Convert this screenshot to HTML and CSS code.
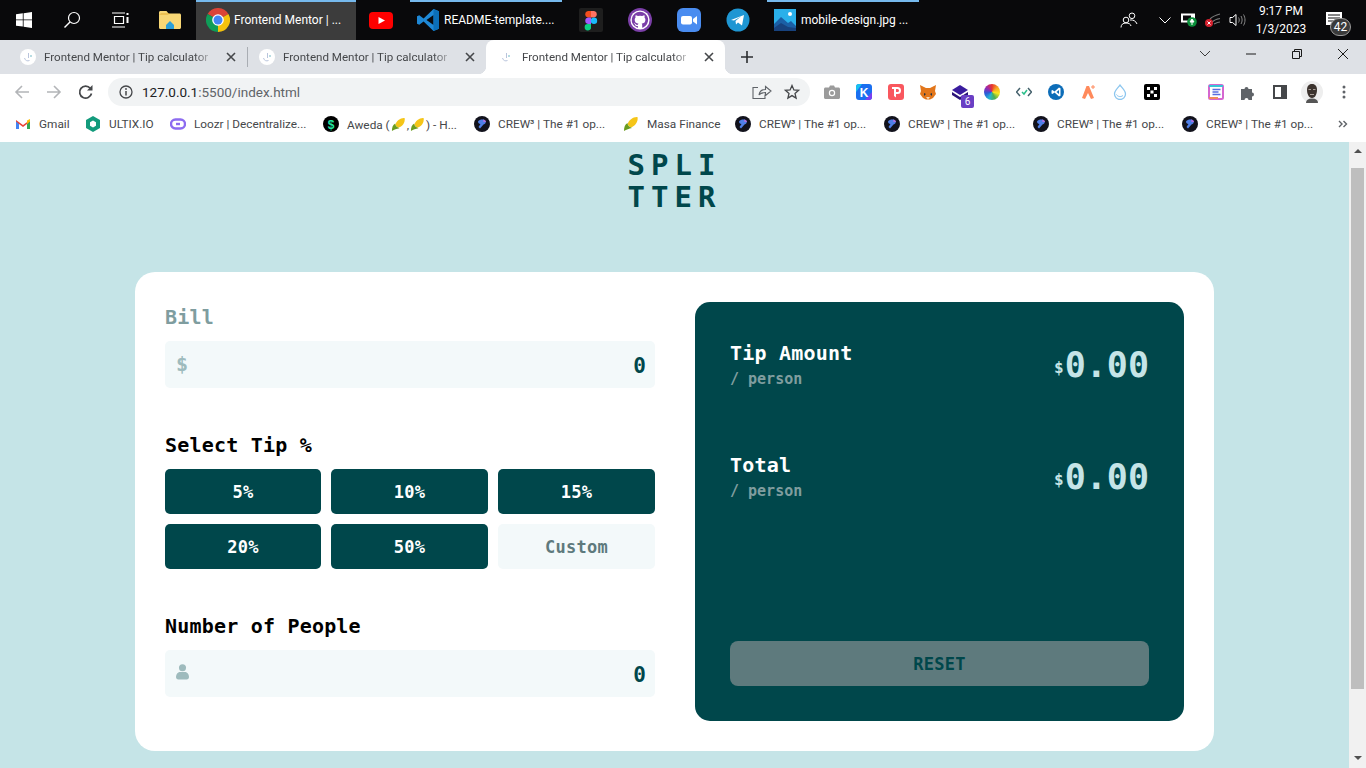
FILE: index.html
```html
<!DOCTYPE html>
<html>
<head>
    <title>Frontend Mentor | Tip calculator app</title>
    <link rel="stylesheet" href="styles.css">
</head>
<body>
    <svg class="sprite">
        <symbol id="fm" viewBox="0 0 16 16">
            <circle cx="8" cy="8" r="8" fill="#fff"/>
            <path d="M8.500 4v5M4.500 9c.5 2.500 3 3.500 5 2.500" stroke="#b9c4dc" stroke-width="1" fill="none"/>
            <circle cx="11" cy="7" r="1" fill="#9fd0d8"/>
        </symbol>
        <symbol id="x" viewBox="0 0 16 16">
            <path d="M4 4l8 8M12 4l-8 8" stroke="#45474a" stroke-width="1.600"/>
        </symbol>
        <symbol id="crew" viewBox="0 0 16 16">
            <circle cx="8" cy="8" r="8" fill="#12121c"/>
            <path d="M4 5.500c2-2.500 6-2.500 7.500-.5 1 1.500-.5 3-2 3.500L6 12.500 4.500 11 6.500 8C5 8 4 7 4 5.500z" fill="#4f7fe8"/>
            <path d="M9 3.500c1.500 0 3 1 3 2.500L9.500 6z" fill="#b06fe0"/>
        </symbol>
        <symbol id="corn" viewBox="0 0 16 16">
            <path d="M14.500 1c-4-.5-9 3-10 7.500l3 3C12 10.500 15.500 5.500 14.500 1z" fill="#f5c518"/>
            <path d="M1 15c0-4 1-6.500 3.500-8 0 2 1.500 4 4.500 5-3 .5-5.500 1.500-8 3z" fill="#6a9c1f"/>
        </symbol>
    </svg>

    <div class="window">
        <div class="taskbar">
            <div class="task task-start">
                <svg width="16" height="16" viewBox="0 0 16 16"><path d="M0 2.300l6.800-1v6.200H0zM7.600 1.200L16 0v7.500H7.600zM0 8.300h6.800v6.300L0 13.700zM7.600 8.300H16V16l-8.400-1.200z" fill="#fff"/></svg>
            </div>
            <div class="task task-search">
                <svg width="18" height="18" viewBox="0 0 18 18"><circle cx="11" cy="7" r="5.500" fill="none" stroke="#fff" stroke-width="1.200"/><path d="M7 11l-5.500 5.500" stroke="#fff" stroke-width="1.400"/></svg>
            </div>
            <div class="task task-view">
                <svg width="18" height="16" viewBox="0 0 18 16"><path d="M3.500 4.500h9v7h-9zM1 1h13M1 15h13" fill="none" stroke="#fff" stroke-width="1.200"/><path d="M15.500 1h2v2h-2zM15.500 5h2v6h-2z" fill="#fff"/></svg>
            </div>
            <div class="task task-files">
                <svg width="22" height="18" viewBox="0 0 22 18"><path d="M0 1.500C0 .7.600 0 1.500 0h6l2 2.500h11c.8 0 1.500.7 1.500 1.500v12.500c0 .8-.7 1.500-1.500 1.500h-19C.6 18 0 17.300 0 16.500z" fill="#f8d775"/><path d="M0 3.500h9l1.500-1H2z" fill="#e0a92e"/><path d="M7 14l4-4 4 4v4H7z" fill="#2b9fd8"/></svg>
            </div>
            <div class="task task-app task-chrome">
                <svg width="24" height="24" viewBox="0 0 24 24"><path d="M12 12L1.600 6A12 12 0 0 1 22.400 6z" fill="#db4437"/><path d="M12 12L22.400 6A12 12 0 0 1 12 24z" fill="#f4c20d"/><path d="M12 12L12 24A12 12 0 0 1 1.600 6z" fill="#0f9d58"/><circle cx="12" cy="12" r="5.800" fill="#fff"/><circle cx="12" cy="12" r="4.500" fill="#4285f4"/></svg>
                <span>Frontend Mentor | ...</span>
            </div>
            <div class="task task-youtube">
                <svg width="24" height="17" viewBox="0 0 24 17"><rect width="24" height="17" rx="4" fill="#f00"/><path d="M9.500 5l6.500 3.500-6.500 3.500z" fill="#fff"/></svg>
            </div>
            <div class="task task-app task-code">
                <svg width="24" height="24" viewBox="0 0 24 24"><path d="M17.500 1L7.600 10.500 3.300 7.200 1 8.300v7.400l2.300 1.100 4.300-3.300 9.900 9.500 5.500-2.200V3.200z" fill="#1e88d6"/><path d="M17.500 7L10.500 12l7 5z" fill="#0a0a0c"/><path d="M17.500 1l5.500 2.200v17.600L17.500 23z" fill="#0b6fb8"/></svg>
                <span>README-template....</span>
            </div>
            <div class="task task-figma">
                <svg width="24" height="24" viewBox="0 0 24 24"><rect width="24" height="24" fill="#1e1e1e" rx="2"/><path d="M12 3H9a3.300 3.300 0 0 0 0 6.500h3z" fill="#f24e1e"/><path d="M12 3h3a3.300 3.300 0 0 1 0 6.500h-3z" fill="#ff7262"/><path d="M12 9.500H9A3.300 3.300 0 0 0 9 16h3z" fill="#a259ff"/><circle cx="15" cy="12.700" r="3.200" fill="#1abcfe"/><path d="M9 16h3v2.700A3.200 3.200 0 1 1 9 16z" fill="#0acf83"/></svg>
            </div>
            <div class="task task-github">
                <svg width="24" height="24" viewBox="0 0 24 24"><circle cx="12" cy="12" r="12" fill="#7b3fa8"/><circle cx="12" cy="12" r="9.600" fill="#fff"/><path d="M12 3.800a8.200 8.200 0 0 0-2.600 16c.4.100.5-.2.500-.4v-1.400c-2.300.5-2.700-1.100-2.700-1.100-.4-1-1-1.200-1-1.200-.7-.5.100-.5.100-.5.800 0 1.300.8 1.300.8.700 1.200 1.900.9 2.400.7 0-.5.300-.9.500-1.100-1.800-.2-3.800-.9-3.800-4.100 0-.9.300-1.600.9-2.100-.1-.3-.4-1.100.1-2.200 0 0 .7-.2 2.300.8a8 8 0 0 1 4.100 0c1.600-1 2.300-.8 2.300-.8.500 1.100.2 1.900.1 2.200.5.500.9 1.300.9 2.100 0 3.200-1.900 3.900-3.800 4.100.3.300.6.700.6 1.500v2.200c0 .2.100.500.600.4A8.200 8.200 0 0 0 12 3.800z" fill="#7b3fa8"/></svg>
            </div>
            <div class="task task-zoom">
                <svg width="24" height="24" viewBox="0 0 24 24"><rect width="24" height="24" rx="6" fill="#4a8cf0"/><rect x="4" y="8" width="11" height="8.500" rx="2" fill="#fff"/><path d="M16 11l4-3v8.500l-4-3z" fill="#fff"/></svg>
            </div>
            <div class="task task-telegram">
                <svg width="24" height="24" viewBox="0 0 24 24"><circle cx="12" cy="12" r="11.500" fill="#1e96d3"/><path d="M5 12l13-5-2 10.500-4-3-2 2-.5-3.500 5.500-4.500-7 4z" fill="#fff"/></svg>
            </div>
            <div class="task task-app task-photo">
                <svg width="22" height="22" viewBox="0 0 22 22"><rect width="22" height="22" fill="#2ab0ea"/><circle cx="16" cy="5" r="2" fill="#fff"/><path d="M0 15l7-7 7 6 3-2 5 5v5H0z" fill="#1b5fa5"/><path d="M0 19l7-5 7 4 8 1v3H0z" fill="#17427e"/></svg>
                <span>mobile-design.jpg ...</span>
            </div>
            <div class="tray">
                <div class="tray-item tray-people">
                    <svg width="18" height="16" viewBox="0 0 18 16"><circle cx="6" cy="8" r="2.800" fill="none" stroke="#fff"/><path d="M1 15.500c0-3 2-4.500 5-4.500s4.500 1 5 3" fill="none" stroke="#fff"/><circle cx="12" cy="3.800" r="2.800" fill="none" stroke="#fff"/><path d="M10 8c3-.5 6 1 7 4" fill="none" stroke="#fff"/></svg>
                </div>
                <div class="tray-item tray-chevron">
                    <svg width="12" height="7" viewBox="0 0 12 7"><path d="M.5.500L6 6 11.500.500" fill="none" stroke="#fff"/></svg>
                </div>
                <div class="tray-item">
                    <svg width="16" height="14" viewBox="0 0 16 14"><rect x=".5" y="1" width="13" height="8" fill="#fff" stroke="#fff"/><rect x="2" y="2.500" width="8" height="5" fill="#0a0a0c"/><circle cx="11" cy="9" r="4.800" fill="#0b8f3a"/><path d="M11 6l2 3h-4zM11 8v4" stroke="#fff" fill="#fff"/></svg>
                </div>
                <div class="tray-item">
                    <svg width="16" height="14" viewBox="0 0 16 14"><path d="M5 6c3-3 6-4 10-5M7 9c2-2 5-3 8-3.500M9 11c2-1 4-2 6-2" fill="none" stroke="#777" stroke-width="1.200"/><circle cx="4" cy="10" r="4" fill="#d4202e"/><path d="M2.500 8.500l3 3M5.500 8.500l-3 3" stroke="#fff"/></svg>
                </div>
                <div class="tray-item">
                    <svg width="17" height="14" viewBox="0 0 17 14"><path d="M1 4.500h2.500L7 1.500v11l-3.500-3H1z" fill="none" stroke="#fff"/><path d="M9.500 4.500c1 1.500 1 3.500 0 5M12 3c1.500 2.500 1.500 5.500 0 8M14.500 1.500c2 3.500 2 7.500 0 11" fill="none" stroke="#888"/></svg>
                </div>
                <div class="tray-clock">
                    <span>9:17 PM</span>
                    <span>1/3/2023</span>
                </div>
                <div class="tray-note">
                    <svg width="16" height="13" viewBox="0 0 16 13"><rect width="16" height="13" fill="#fff"/><path d="M2 3h12M2 6h12M2 9h8" stroke="#0a0a0c"/></svg>
                    <span class="note-badge">42</span>
                </div>
            </div>
        </div>

        <div class="tabstrip">
            <div class="tab">
                <svg class="tab-icon"><use href="#fm"/></svg>
                <span class="tab-title">Frontend Mentor | Tip calculator</span>
                <svg class="tab-close"><use href="#x"/></svg>
            </div>
            <div class="tab-divider"></div>
            <div class="tab">
                <svg class="tab-icon"><use href="#fm"/></svg>
                <span class="tab-title">Frontend Mentor | Tip calculator</span>
                <svg class="tab-close"><use href="#x"/></svg>
            </div>
            <div class="tab tab-active">
                <svg class="tab-icon"><use href="#fm"/></svg>
                <span class="tab-title">Frontend Mentor | Tip calculator</span>
                <svg class="tab-close"><use href="#x"/></svg>
            </div>
            <svg class="tab-new" width="12" height="12" viewBox="0 0 12 12"><path d="M6 0v12M0 6h12" stroke="#2b2d30" stroke-width="1.600"/></svg>
            <div class="window-controls">
                <svg width="46" height="12" viewBox="0 0 46 12"><path d="M18 3l5 5 5-5" fill="none" stroke="#3c3c3c"/></svg>
                <svg width="46" height="12" viewBox="0 0 46 12"><path d="M18 6h10" stroke="#1a1a1a"/></svg>
                <svg width="46" height="12" viewBox="0 0 46 12"><path d="M18.500 3.500h7v7h-7zM20.500 3.500v-2h7v7h-2" fill="none" stroke="#1a1a1a"/></svg>
                <svg width="46" height="12" viewBox="0 0 46 12"><path d="M18 1l10 10M28 1L18 11" stroke="#1a1a1a"/></svg>
            </div>
        </div>

        <div class="toolbar">
            <div class="tool-btn">
                <svg width="16" height="16" viewBox="0 0 16 16"><path d="M15 8H2M8 2L2 8l6 6" fill="none" stroke="#b3b5b8" stroke-width="1.600"/></svg>
            </div>
            <div class="tool-btn">
                <svg width="16" height="16" viewBox="0 0 16 16"><path d="M1 8h13M8 2l6 6-6 6" fill="none" stroke="#b3b5b8" stroke-width="1.600"/></svg>
            </div>
            <div class="tool-btn">
                <svg width="16" height="16" viewBox="0 0 16 16"><path d="M13.500 9.500a6 6 0 1 1-1.200-5.200" fill="none" stroke="#45474a" stroke-width="1.700"/><path d="M14.500 1v5.500H9z" fill="#45474a"/></svg>
            </div>
            <div class="omnibox">
                <svg class="omni-info" width="14" height="14" viewBox="0 0 14 14"><circle cx="7" cy="7" r="6" fill="none" stroke="#45474a" stroke-width="1.300"/><path d="M7 6v4.500" stroke="#45474a" stroke-width="1.500"/><circle cx="7" cy="4" r=".9" fill="#45474a"/></svg>
                <span class="omni-url"><b>127.0.0.1</b>:5500/index.html</span>
                <div class="omni-actions">
                    <svg width="32" height="16" viewBox="0 0 32 16"><path d="M14 3.500H9v11h12v-4M15 11c.5-3.500 3-5.500 6.500-5.500V2.500L27 7l-5.500 4.500V8.500C19 8.500 16.500 9 15 11z" fill="none" stroke="#5f6368" stroke-width="1.100"/></svg>
                    <svg width="32" height="16" viewBox="0 0 32 16"><path d="M16 1.500l1.900 4.400 4.700.4-3.600 3.100 1.100 4.700-4.100-2.500-4.100 2.500 1.100-4.700-3.600-3.100 4.700-.4z" fill="none" stroke="#45474a" stroke-width="1.300"/></svg>
                </div>
            </div>
            <div class="extensions">
                <div class="tool-btn"><svg width="16" height="14" viewBox="0 0 16 14"><path d="M1.500 2.500H5L6 .5h4l1 2h3.500c.8 0 1.500.7 1.500 1.500v8.500c0 .8-.7 1.500-1.500 1.500h-13C.7 14 0 13.300 0 12.500V4c0-.8.700-1.500 1.500-1.500z" fill="#9b9b9b"/><circle cx="8" cy="8" r="3.200" fill="#fff"/><circle cx="8" cy="8" r="2" fill="#9b9b9b"/></svg></div>
                <div class="tool-btn"><svg width="16" height="16" viewBox="0 0 16 16"><rect width="16" height="16" rx="3" fill="#1a6ff0"/><path d="M0 3a3 3 0 0 1 3-3h3L0 8z" fill="#19c2f0"/><path d="M16 8v5a3 3 0 0 1-3 3H9z" fill="#7a3ff0"/><text x="8" y="12.500" class="ext-letter">K</text></svg></div>
                <div class="tool-btn"><svg width="16" height="16" viewBox="0 0 16 16"><rect width="16" height="16" rx="3" fill="#f9575e"/><path d="M4 3h5.500a3.500 3.500 0 0 1 0 7H8v3.500L6 12V5H4z" fill="#fff"/><path d="M8 5h1.500a1.500 1.500 0 0 1 0 3H8z" fill="#f9575e"/></svg></div>
                <div class="tool-btn"><svg width="16" height="16" viewBox="0 0 16 16"><path d="M0 1l6 3h4l6-3-1 6 1 3-3 4-3 1.500H6L3 14l-3-4 1-3z" fill="#e2761b"/><path d="M4 9l2 1-2 2zM12 9l-2 1 2 2z" fill="#233447"/><path d="M6 13h4l-2 2.500z" fill="#f6ddc1"/></svg></div>
                <div class="tool-btn tool-badge"><svg width="16" height="16" viewBox="0 0 16 16"><path d="M8 1l8 5-8 5-8-5z" fill="#3a1c9e"/><path d="M0 8l8 5 8-5v3l-8 5-8-5z" fill="#2a1478"/></svg><span class="ext-badge">6</span></div>
                <div class="tool-btn"><span class="ext-wheel"></span></div>
                <div class="tool-btn"><svg width="16" height="10" viewBox="0 0 16 10"><path d="M4 1L.5 5 4 9M12 1l3.500 4L12 9" fill="none" stroke="#44606b" stroke-width="1.500"/><path d="M6 5l2 2 3-4" fill="none" stroke="#2bbf8a" stroke-width="1.500"/></svg></div>
                <div class="tool-btn"><svg width="16" height="16" viewBox="0 0 16 16"><circle cx="8" cy="8" r="8" fill="#0d6db8"/><path d="M11 3.500L6.500 7.500 4.500 6 3.500 6.500v3l1 .5 2-1.500 4.500 4 1.500-.7V4.200z" fill="#fff"/><path d="M11 6L8.500 8l2.500 2z" fill="#0d6db8"/></svg></div>
                <div class="tool-btn"><svg width="16" height="16" viewBox="0 0 16 16"><path d="M6.500 2h2.500l5 12-3 1-3-6-3 6-3-1z" fill="#ff8a5c"/><path d="M13 1v4M11 3h4" stroke="#ff8a5c"/></svg></div>
                <div class="tool-btn"><svg width="14" height="16" viewBox="0 0 14 16"><path d="M7 1c2 3 5.500 5.500 5.500 9A5.500 5.500 0 0 1 1.500 10C1.500 6.500 5 4 7 1z" fill="none" stroke="#8cc6ef" stroke-width="1.300"/><path d="M3.500 10.500c1 2 4 3 6.500 1" fill="none" stroke="#8cc6ef"/></svg></div>
                <div class="tool-btn"><svg width="16" height="16" viewBox="0 0 16 16"><rect width="16" height="16" rx="2" fill="#000"/><path d="M3 3h3v3H3zM10 3h3v3h-3zM6.500 6.500h3v3h-3zM3 10h3v3H3zM10 10h3v3h-3z" fill="#fff"/></svg></div>
                <div class="tool-btn tool-gap"><svg width="16" height="16" viewBox="0 0 16 16"><rect x="1" y="1" width="14" height="14" rx="1.500" fill="none" stroke="#d567d0" stroke-width="2"/><path d="M1 2h14" stroke="#38c4d8" stroke-width="2"/><path d="M1 14h9" stroke="#f08a5c" stroke-width="2"/><path d="M4.500 5.500h8M4.500 8h6M4.500 10.500h8" stroke="#5a6ee0" stroke-width="1.300"/></svg></div>
                <div class="tool-btn"><svg width="16" height="16" viewBox="0 0 16 16"><path d="M1 5h3.500a2 2 0 1 1 4 0H12v3.500a2 2 0 1 1 0 4V16H8.500a2 2 0 1 0-4 0H1z" fill="#5f6368"/></svg></div>
                <div class="tool-btn"><svg width="14" height="14" viewBox="0 0 14 14"><rect x="1" y="1" width="12" height="12" fill="none" stroke="#45474a" stroke-width="2"/><rect x="8" y="1" width="5" height="12" fill="#45474a"/></svg></div>
                <div class="tool-btn"><svg width="22" height="22" viewBox="0 0 22 22"><circle cx="11" cy="11" r="11" fill="#eeeeee"/><path d="M11 3c3.500 0 5 2.500 5 6s-1.500 8-5 8-5-4.500-5-8 1.500-6 5-6z" fill="#3c332e"/><path d="M5 22c0-3 2-4.500 6-4.500S17 19 17 22z" fill="#555"/><path d="M7.500 8.500h2.500M12 8.500h2.500M9 13.500h4" stroke="#a89f98"/></svg></div>
                <div class="tool-btn"><svg width="4" height="14" viewBox="0 0 4 14"><circle cx="2" cy="2" r="1.500" fill="#5f6368"/><circle cx="2" cy="7" r="1.500" fill="#5f6368"/><circle cx="2" cy="12" r="1.500" fill="#5f6368"/></svg></div>
            </div>
        </div>

        <div class="bookmarks">
            <div class="bookmark">
                <svg width="16" height="16" viewBox="0 0 16 16"><path d="M1 13V4l7 5 7-5v9h-3V8L8 11 4 8v5z" fill="#ea4335"/><path d="M1 13h3V8L1 5.500z" fill="#4285f4"/><path d="M12 13h3V5.500L12 8z" fill="#34a853"/><path d="M12 4.500l3-1.500v2.500L12 8z" fill="#fbbc04"/></svg>
                <span>Gmail</span>
            </div>
            <div class="bookmark">
                <svg width="16" height="16" viewBox="0 0 16 16"><path d="M8 0l7 4v8l-7 4-7-4V4z" fill="#139b7c"/><path d="M8 4.500l3 1.700v3.600l-3 1.700-3-1.700V6.200z" fill="#fff"/></svg>
                <span>ULTIX.IO</span>
            </div>
            <div class="bookmark">
                <svg width="16" height="16" viewBox="0 0 16 16"><rect x="1" y="3.500" width="14" height="9" rx="4.500" fill="none" stroke="#8d6cf0" stroke-width="2.400"/><path d="M6 8h4" stroke="#8d6cf0" stroke-width="2.400"/></svg>
                <span>Loozr | Decentralize...</span>
            </div>
            <div class="bookmark">
                <svg width="16" height="16" viewBox="0 0 16 16"><circle cx="8" cy="8" r="8" fill="#000"/><text x="8" y="12.500" class="ext-dollar">$</text></svg>
                <span>Aweda (<svg class="inline-corn"><use href="#corn"/></svg>,<svg class="inline-corn"><use href="#corn"/></svg>) - H...</span>
            </div>
            <div class="bookmark"><svg width="16" height="16"><use href="#crew"/></svg><span>CREW³ | The #1 op...</span></div>
            <div class="bookmark"><svg width="16" height="16"><use href="#corn"/></svg><span>Masa Finance</span></div>
            <div class="bookmark"><svg width="16" height="16"><use href="#crew"/></svg><span>CREW³ | The #1 op...</span></div>
            <div class="bookmark"><svg width="16" height="16"><use href="#crew"/></svg><span>CREW³ | The #1 op...</span></div>
            <div class="bookmark"><svg width="16" height="16"><use href="#crew"/></svg><span>CREW³ | The #1 op...</span></div>
            <div class="bookmark"><svg width="16" height="16"><use href="#crew"/></svg><span>CREW³ | The #1 op...</span></div>
            <svg class="bookmarks-more" width="10" height="8" viewBox="0 0 10 8"><path d="M1 1l3 3-3 3M5.500 1l3 3-3 3" fill="none" stroke="#5f6368" stroke-width="1.400"/></svg>
        </div>

        <div class="viewport">
            <div class="page">
                <h1 class="logo">SPLI<br>TTER</h1>
                <div class="card">
                    <form class="calc-form">
                        <label class="field-label label-muted">Bill</label>
                        <div class="field">
                            <span class="field-icon">$</span>
                            <input class="field-input" type="text" value="0">
                        </div>

                        <label class="field-label label-spaced">Select Tip %</label>
                        <div class="tip-grid">
                            <button type="button" class="tip-btn">5%</button>
                            <button type="button" class="tip-btn">10%</button>
                            <button type="button" class="tip-btn">15%</button>
                            <button type="button" class="tip-btn">20%</button>
                            <button type="button" class="tip-btn">50%</button>
                            <button type="button" class="tip-btn tip-custom">Custom</button>
                        </div>

                        <label class="field-label label-spaced">Number of People</label>
                        <div class="field">
                            <svg class="field-person" width="13" height="16" viewBox="0 0 14 17"><circle cx="7" cy="4" r="3.800" fill="#9ebbbd"/><path d="M0 14c0-3.500 2.500-5.500 4.500-5.500h5C11.500 8.500 14 10.500 14 14c0 1.500-1 2.500-2.500 2.500h-9C1 16.500 0 15.500 0 14z" fill="#9ebbbd"/></svg>
                            <input class="field-input" type="text" value="0">
                        </div>
                    </form>

                    <div class="result-panel">
                        <div class="result-row">
                            <div>
                                <div class="result-title">Tip Amount</div>
                                <div class="result-sub">/ person</div>
                            </div>
                            <div class="result-value"><span class="result-dollar">$</span>0.00</div>
                        </div>
                        <div class="result-row">
                            <div>
                                <div class="result-title">Total</div>
                                <div class="result-sub">/ person</div>
                            </div>
                            <div class="result-value"><span class="result-dollar">$</span>0.00</div>
                        </div>
                        <button type="button" class="reset-btn">RESET</button>
                    </div>
                </div>
            </div>
            <div class="scrollbar">
                <span class="scroll-up"></span>
                <div class="scroll-thumb"></div>
                <span class="scroll-down"></span>
            </div>
        </div>
    </div>
</body>
</html>
```

FILE: styles.css
```css
* {
    box-sizing: border-box;
}
body {
    margin: 0;
    font-family: Roboto, 'Noto Sans', Arial, sans-serif;
    overflow: hidden;
}
.sprite {
    position: absolute;
    width: 0;
    height: 0;
}
.window {
    width: 1366px;
    height: 768px;
    display: flex;
    flex-direction: column;
}

/* windows taskbar */
.taskbar {
    height: 40px;
    display: flex;
    background: #09090b;
    color: white;
    font-size: 12px;
}
.task {
    display: flex;
    align-items: center;
    justify-content: center;
    flex: none;
}
.task-start, .task-search, .task-view {
    width: 48px;
}
.task-files {
    width: 52px;
}
.task-youtube {
    width: 50px;
}
.task-app {
    justify-content: flex-start;
    gap: 4px;
    border-top: 2px solid #76b9ed;
    padding-bottom: 2px;
    white-space: nowrap;
}
.task-chrome {
    width: 160px;
    padding-left: 10px;
    background: #3c3c3c;
}
.task-code {
    width: 152px;
    margin-left: 4px;
    padding-left: 6px;
}
.task-figma {
    width: 58px;
}
.task-github {
    width: 40px;
}
.task-zoom {
    width: 58px;
}
.task-telegram {
    width: 40px;
}
.task-photo {
    width: 152px;
    margin-left: 9px;
    padding-left: 7px;
    gap: 5px;
}
.tray {
    margin-left: auto;
    padding-right: 13px;
    display: flex;
    align-items: center;
}
.tray-item {
    width: 24px;
    display: flex;
    justify-content: center;
}
.tray-people {
    width: 32px;
    margin-right: 8px;
}
.tray-clock {
    width: 64px;
    display: flex;
    flex-direction: column;
    align-items: center;
    gap: 2px;
    font-size: 12px;
    line-height: 16px;
}
.tray-note {
    width: 40px;
    height: 40px;
    position: relative;
    padding: 12px 0 0 13px;
}
.note-badge {
    position: absolute;
    left: 17px;
    top: 18px;
    width: 21px;
    height: 18px;
    border-radius: 10px;
    border: 1px solid #9a9a9a;
    background: #3a3a3a;
    font-size: 12px;
    line-height: 16px;
    text-align: center;
}

/* chrome tabs */
.tabstrip {
    height: 34px;
    display: flex;
    align-items: center;
    padding-left: 8px;
    background: #dee1e6;
    font-size: 11.600px;
    color: #45474a;
}
.tab {
    width: 239px;
    height: 34px;
    padding: 0 8px 0 12px;
    display: flex;
    align-items: center;
    gap: 8px;
    flex: none;
}
.tab-active {
    position: relative;
    background: white;
    border-radius: 8px 8px 0 0;
}
.tab-active::before, .tab-active::after {
    content: '';
    position: absolute;
    bottom: 0;
    width: 8px;
    height: 8px;
}
.tab-active::before {
    left: -8px;
    background: radial-gradient(circle at 0 0, transparent 8px, white 8.5px);
}
.tab-active::after {
    right: -8px;
    background: radial-gradient(circle at 100% 0, transparent 8px, white 8.5px);
}
.tab-divider {
    width: 1px;
    height: 20px;
    margin-right: -1px;
    background: #a9adb3;
    flex: none;
}
.tab-icon {
    width: 16px;
    height: 16px;
    flex: none;
}
.tab-title {
    flex: 1;
    min-width: 0;
    white-space: nowrap;
    -webkit-mask-image: linear-gradient(to right, black 88%, transparent 100%);
    mask-image: linear-gradient(to right, black 88%, transparent 100%);
}
.tab-close {
    width: 16px;
    height: 16px;
    flex: none;
}
.tab-new {
    margin-left: 16px;
}
.window-controls {
    margin-left: auto;
    padding-bottom: 6px;
    display: flex;
    gap: 0;
}

/* chrome toolbar */
.toolbar {
    height: 36px;
    padding-left: 6px;
    display: flex;
    align-items: center;
    background: white;
}
.tool-btn {
    width: 32px;
    height: 28px;
    display: flex;
    align-items: center;
    justify-content: center;
    flex: none;
    position: relative;
}
.omnibox {
    width: 702px;
    height: 28px;
    margin-left: 6px;
    padding-left: 11px;
    display: flex;
    align-items: center;
    background: #f1f3f4;
    border-radius: 14px;
    font-size: 13.500px;
    color: #5f6368;
}
.omni-info {
    margin-right: 9px;
}
.omni-url b {
    font-weight: normal;
    color: #202124;
}
.omni-actions {
    margin-left: auto;
    padding-right: 2px;
    display: flex;
}
.extensions {
    margin-left: 6px;
    display: flex;
}
.tool-gap {
    margin-left: 32px;
}
.ext-letter {
    font-family: 'Liberation Sans', sans-serif;
    font-size: 12px;
    font-weight: bold;
    fill: white;
    text-anchor: middle;
}
.ext-dollar {
    font-family: 'Liberation Sans', sans-serif;
    font-size: 12px;
    font-weight: bold;
    fill: #22e6a0;
    text-anchor: middle;
}
.ext-badge {
    position: absolute;
    right: 2px;
    bottom: -2px;
    width: 13px;
    height: 13px;
    border-radius: 2px;
    background: #6a3fc4;
    color: white;
    font-size: 10px;
    line-height: 13px;
    text-align: center;
}
.ext-wheel {
    width: 16px;
    height: 16px;
    border-radius: 50%;
    background: conic-gradient(#e8352e, #f5a623, #f7e71c, #4caf50, #23b5d3, #2a5bd7, #9b27af, #e8352e);
}

/* bookmarks bar */
.bookmarks {
    height: 32px;
    padding-left: 7px;
    padding-bottom: 4px;
    display: grid;
    grid-template-columns: 70px 85px 153px 151px 149px 112px 149px 149px 149px 149px 1fr;
    align-items: center;
    background: white;
    font-size: 11.800px;
    color: #45474a;
}
.bookmark {
    padding-left: 8px;
    display: flex;
    align-items: center;
    gap: 8px;
    white-space: nowrap;
}
.inline-corn {
    width: 15px;
    height: 15px;
    margin: 0 1px;
    vertical-align: -3px;
}
.bookmarks-more {
    justify-self: end;
    margin-right: 18px;
}

/* page */
.viewport {
    flex: 1;
    min-height: 0;
    display: flex;
}
.page {
    flex: 1;
    padding-top: 7px;
    background: #c5e4e7;
    font-family: 'DejaVu Sans Mono', 'Liberation Mono', monospace;
    font-weight: bold;
    overflow: hidden;
}
.logo {
    margin: 0;
    font-size: 29px;
    line-height: 32px;
    letter-spacing: 6px;
    text-align: center;
    color: #00474b;
}
.card {
    width: 1079px;
    height: 479px;
    margin: 59px auto 0;
    padding: 30px;
    display: flex;
    gap: 40px;
    background: white;
    border-radius: 20px;
}
.calc-form {
    width: 490px;
    flex: none;
}
.field-label {
    display: block;
    font-size: 20px;
    line-height: 30px;
    letter-spacing: 0.2px;
    color: black;
}
.label-muted {
    color: #7f9d9f;
}
.label-spaced {
    margin-top: 42px;
}
.field {
    height: 47px;
    margin-top: 9px;
    padding: 0 9px 0 11px;
    display: flex;
    align-items: center;
    background: #f3f9fa;
    border-radius: 5px;
}
.field-icon {
    font-size: 20px;
    color: #9ebbbd;
    margin-top: -2px;
}
.field-person {
    margin-top: -4px;
}
.field-input {
    flex: 1;
    min-width: 0;
    border: none;
    outline: none;
    background: none;
    padding: 0;
    margin-top: 2px;
    font: inherit;
    font-size: 21px;
    text-align: right;
    color: #00474b;
}
.tip-grid {
    margin-top: 9px;
    display: grid;
    grid-template-columns: 156px 157px 157px;
    grid-auto-rows: 45px;
    gap: 10px;
}
.tip-btn {
    border: none;
    border-radius: 5px;
    background: #00474b;
    color: white;
    font: inherit;
    font-size: 17px;
    letter-spacing: 0.3px;
}
.tip-custom {
    background: #f3f9fa;
    color: #5e7a7d;
}
.result-panel {
    flex: 1;
    padding: 37px 35px 35px;
    display: flex;
    flex-direction: column;
    background: #00474b;
    border-radius: 15px;
}
.result-row {
    height: 52px;
    margin-bottom: 60px;
    display: flex;
    justify-content: space-between;
    align-items: center;
}
.result-title {
    font-size: 20px;
    line-height: 28px;
    letter-spacing: 0.2px;
    color: white;
}
.result-sub {
    font-size: 15px;
    line-height: 24px;
    color: #7f9d9f;
}
.result-value {
    display: flex;
    align-items: center;
    font-size: 35px;
    line-height: 50px;
    color: #c5e4e7;
}
.result-dollar {
    margin: 6px 1px 0 0;
    font-size: 16px;
}
.reset-btn {
    height: 45px;
    margin-top: auto;
    border: none;
    border-radius: 8px;
    background: #5e7a7d;
    color: #00474b;
    font: inherit;
    font-size: 17px;
    letter-spacing: 0.3px;
}

/* browser scrollbar */
.scrollbar {
    width: 17px;
    display: flex;
    flex-direction: column;
    align-items: center;
    background: #f1f1f1;
}
.scroll-up, .scroll-down {
    width: 0;
    height: 0;
    border-left: 4px solid transparent;
    border-right: 4px solid transparent;
}
.scroll-up {
    margin-top: 7px;
    border-bottom: 4px solid #505050;
}
.scroll-thumb {
    width: 13px;
    height: 521px;
    margin-top: 15px;
    background: #bebebe;
}
.scroll-down {
    margin-top: 67px;
    border-top: 4px solid #505050;
}
```
